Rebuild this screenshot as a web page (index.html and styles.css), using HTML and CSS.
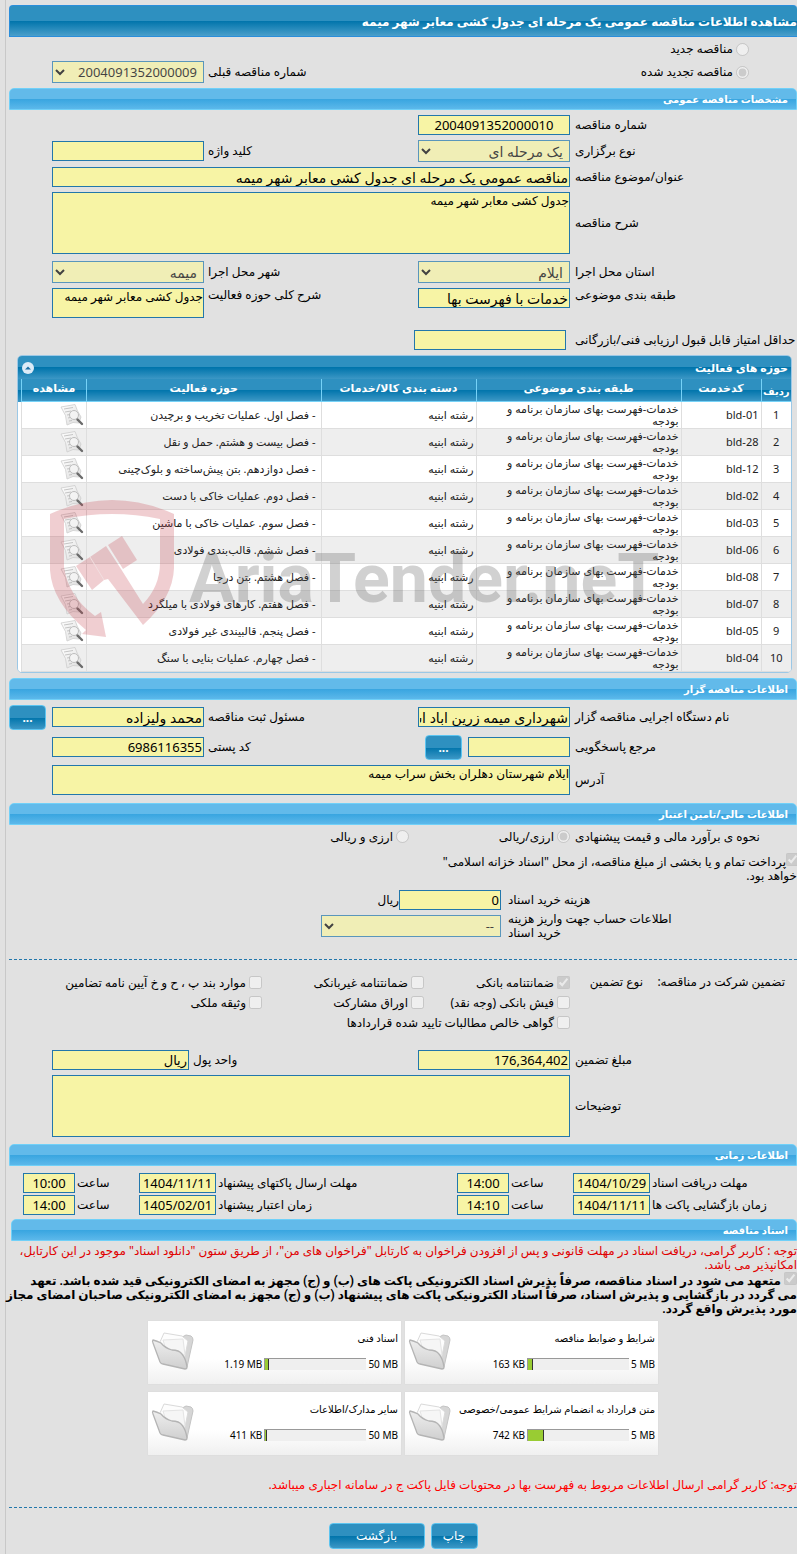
FILE: index.html
```html
<!DOCTYPE html>
<html lang="fa" dir="rtl">

<head>
    <meta charset="UTF-8">
    <meta name="viewport" content="width=device-width, initial-scale=1.0">
    <title>مشاهده اطلاعات مناقصه عمومی</title>
    <link rel="stylesheet" href="styles.css">
</head>

<body>
    <!-- icons -->
    <svg class="defs" width="0" height="0" aria-hidden="true">
        <defs>
            <linearGradient id="paper" x1="0" y1="0" x2="1" y2="1">
                <stop offset="0" stop-color="#ffffff" />
                <stop offset="1" stop-color="#dcdcdc" />
            </linearGradient>
            <linearGradient id="front" x1="0" y1="0" x2="0" y2="1">
                <stop offset="0" stop-color="#eeeeee" />
                <stop offset="1" stop-color="#cfcfcf" />
            </linearGradient>
        </defs>
        <symbol id="view" viewBox="0 0 24 24">
            <path d="M1 4 L15 1.500 Q17 8 21 14 L19 20 Q13 18 7 22 Q7 12 1 4Z" fill="url(#paper)" stroke="#cdcdcd" stroke-width=".8" />
            <path d="M4 6 L13 4.500 M5 9 L11 8 M7 12 L10 11.500 M8 15 L10 14.500 M9 18 L12 17.500" stroke="#b8b8b8" stroke-width=".8" fill="none" />
            <circle cx="14" cy="12" r="4.500" fill="#f4f4f4" fill-opacity=".85" stroke="#bdbdbd" />
            <path d="M17.500 16.500 L22 21" stroke="#6b6b6b" stroke-width="2.400" stroke-linecap="round" />
        </symbol>
        <symbol id="folder" viewBox="0 0 44 40">
            <path d="M30 9 Q31 5 35 4 L40 5 Q42 6 42 9 L36 36 L31 33Z" fill="#d6d6d6" stroke="#c4c4c4" />
            <path d="M9 11 L13 2 L31 5 L37 10 L33 30 L14 24Z" fill="#fdfdfd" stroke="#dadada" />
            <path d="M12 9 L32 8 L34 24 L16 22Z" fill="#f6f6f6" stroke="#e4e4e4" />
            <path d="M2 9 Q1 10 2 12 L9 31 Q10 33 12 33 L34 38 Q36 38 36 36 Q35 28 31 23 Q28 19 21 19 Q14 17 10 12 Q6 10 2 9Z" fill="url(#front)" stroke="#b4b4b4" stroke-width="1.300" />
        </symbol>
    </svg>

    <div class="page">
        <h1 class="page-title">مشاهده اطلاعات مناقصه عمومی یک مرحله ای جدول کشی معابر شهر میمه</h1>

        <div class="form">
            <div class="row row-radio">
                <label class="option"><input type="radio" name="kind" disabled>مناقصه جدید</label>
            </div>
            <div class="row">
                <label class="option"><input type="radio" name="kind" checked disabled>مناقصه تجدید شده</label>
                <label class="lbl-mid" for="prev">شماره مناقصه قبلی</label>
                <select class="field" id="prev" disabled>
                    <option>2004091352000009</option>
                </select>
                <div class="tail"></div>
            </div>
        </div>

        <h2 class="bar">مشخصات مناقصه عمومی</h2>
        <div class="form">
            <div class="row">
                <label class="lbl" for="number">شماره مناقصه</label>
                <input class="field center" id="number" type="text" value="2004091352000010" readonly>
            </div>
            <div class="row">
                <label class="lbl" for="type">نوع برگزاری</label>
                <select class="field fa" id="type" disabled>
                    <option>یک مرحله ای</option>
                </select>
                <label class="lbl-mid" for="keyword">کلید واژه</label>
                <input class="field" id="keyword" type="text" readonly>
                <div class="tail"></div>
            </div>
            <div class="row">
                <label class="lbl" for="subject">عنوان/موضوع مناقصه</label>
                <input class="field fa wide" id="subject" type="text" value="مناقصه عمومی یک مرحله ای جدول کشی معابر شهر میمه" readonly>
                <div class="tail"></div>
            </div>
            <div class="row">
                <label class="lbl" for="desc">شرح مناقصه</label>
                <textarea class="field wide tall" id="desc" readonly>جدول کشی معابر شهر میمه</textarea>
                <div class="tail"></div>
            </div>
            <div class="row spaced">
                <label class="lbl" for="province">استان محل اجرا</label>
                <select class="field fa" id="province" disabled>
                    <option>ایلام</option>
                </select>
                <label class="lbl-mid" for="city">شهر محل اجرا</label>
                <select class="field fa" id="city" disabled>
                    <option>میمه</option>
                </select>
                <div class="tail"></div>
            </div>
            <div class="row row-top">
                <label class="lbl" for="category">طبقه بندی موضوعی</label>
                <input class="field fa" id="category" type="text" value="خدمات با فهرست بها" readonly>
                <label class="lbl-mid" for="activity">شرح کلی حوزه فعالیت</label>
                <textarea class="field" id="activity" readonly>جدول کشی معابر شهر میمه</textarea>
                <div class="tail"></div>
            </div>
            <div class="row row-score">
                <label class="lbl" for="score">حداقل امتیاز قابل قبول ارزیابی فنی/بازرگانی</label>
                <input class="field" id="score" type="text" readonly>
            </div>
        </div>

        <div class="panel">
            <div class="panel-head">
                <span>حوزه های فعالیت</span>
                <button class="toggle" type="button" aria-label="بستن">
                    <svg width="12" height="12" viewBox="0 0 12 12"><path d="M3 7.500 L6 4.500 L9 7.500Z" fill="#1a6fa5" /></svg>
                </button>
            </div>
            <div class="panel-body">
                <table class="list">
                    <colgroup>
                        <col class="c-row">
                        <col class="c-code">
                        <col class="c-cat">
                        <col class="c-group">
                        <col>
                        <col class="c-view">
                    </colgroup>
                    <thead>
                        <tr>
                            <th class="low">ردیف</th>
                            <th>کدخدمت</th>
                            <th>طبقه بندی موضوعی</th>
                            <th>دسته بندی کالا/خدمات</th>
                            <th>حوزه فعالیت</th>
                            <th>مشاهده</th>
                        </tr>
                    </thead>
                    <tbody>
                        <tr>
                            <td class="n">1</td><td class="code">bld-01</td>
                            <td>خدمات-فهرست بهای سازمان برنامه و بودجه</td><td>رشته ابنیه</td>
                            <td>- فصل اول. عملیات تخریب و برچیدن</td>
                            <td class="view"><svg class="icon"><use href="#view" /></svg></td>
                        </tr>
                        <tr>
                            <td class="n">2</td><td class="code">bld-28</td>
                            <td>خدمات-فهرست بهای سازمان برنامه و بودجه</td><td>رشته ابنیه</td>
                            <td>- فصل بیست و هشتم. حمل و نقل</td>
                            <td class="view"><svg class="icon"><use href="#view" /></svg></td>
                        </tr>
                        <tr>
                            <td class="n">3</td><td class="code">bld-12</td>
                            <td>خدمات-فهرست بهای سازمان برنامه و بودجه</td><td>رشته ابنیه</td>
                            <td>- فصل دوازدهم. بتن پیش‌ساخته و بلوک‌چینی</td>
                            <td class="view"><svg class="icon"><use href="#view" /></svg></td>
                        </tr>
                        <tr>
                            <td class="n">4</td><td class="code">bld-02</td>
                            <td>خدمات-فهرست بهای سازمان برنامه و بودجه</td><td>رشته ابنیه</td>
                            <td>- فصل دوم. عملیات خاکی با دست</td>
                            <td class="view"><svg class="icon"><use href="#view" /></svg></td>
                        </tr>
                        <tr>
                            <td class="n">5</td><td class="code">bld-03</td>
                            <td>خدمات-فهرست بهای سازمان برنامه و بودجه</td><td>رشته ابنیه</td>
                            <td>- فصل سوم. عملیات خاکی با ماشین</td>
                            <td class="view"><svg class="icon"><use href="#view" /></svg></td>
                        </tr>
                        <tr>
                            <td class="n">6</td><td class="code">bld-06</td>
                            <td>خدمات-فهرست بهای سازمان برنامه و بودجه</td><td>رشته ابنیه</td>
                            <td>- فصل ششم. قالب‌بندی فولادی</td>
                            <td class="view"><svg class="icon"><use href="#view" /></svg></td>
                        </tr>
                        <tr>
                            <td class="n">7</td><td class="code">bld-08</td>
                            <td>خدمات-فهرست بهای سازمان برنامه و بودجه</td><td>رشته ابنیه</td>
                            <td>- فصل هشتم. بتن درجا</td>
                            <td class="view"><svg class="icon"><use href="#view" /></svg></td>
                        </tr>
                        <tr>
                            <td class="n">8</td><td class="code">bld-07</td>
                            <td>خدمات-فهرست بهای سازمان برنامه و بودجه</td><td>رشته ابنیه</td>
                            <td>- فصل هفتم. کارهای فولادی با میلگرد</td>
                            <td class="view"><svg class="icon"><use href="#view" /></svg></td>
                        </tr>
                        <tr>
                            <td class="n">9</td><td class="code">bld-05</td>
                            <td>خدمات-فهرست بهای سازمان برنامه و بودجه</td><td>رشته ابنیه</td>
                            <td>- فصل پنجم. قالبیندی غیر فولادی</td>
                            <td class="view"><svg class="icon"><use href="#view" /></svg></td>
                        </tr>
                        <tr>
                            <td class="n">10</td><td class="code">bld-04</td>
                            <td>خدمات-فهرست بهای سازمان برنامه و بودجه</td><td>رشته ابنیه</td>
                            <td>- فصل چهارم. عملیات بنایی با سنگ</td>
                            <td class="view"><svg class="icon"><use href="#view" /></svg></td>
                        </tr>
                    </tbody>
                </table>
            </div>
            <!-- watermark over the list -->
            <div class="watermark" dir="ltr">
                <svg width="126" height="138" viewBox="0 0 126 138">
                    <path d="M0 14 Q62 -14 124 14 V68 Q123 98 93 125 L58 79 L54 80 L42 90 L26 66 L40 57 L56 46 L71 69 L93 104 Q110 86 110 63 V19 Q62 9 14 19 V67 Q18 96 45 116 L51 112 L56 137 L32 134 L36 130 Q2 102 0 70Z" />
                    <path d="M58 45 L72 36 L87 60 L73 69Z" />
                    <path d="M40 57 L54 80" stroke="#f2dfe0" fill="none" />
                </svg>
                <span>AriaTender.neT</span>
            </div>
        </div>

        <h2 class="bar">اطلاعات مناقصه گزار</h2>
        <div class="form">
            <div class="row row-btn">
                <label class="lbl" for="org">نام دستگاه اجرایی مناقصه گزار</label>
                <input class="field fa" id="org" type="text" value="شهرداری میمه زرین اباد استان ایلام" readonly>
                <label class="lbl-mid" for="registrar">مسئول ثبت مناقصه</label>
                <input class="field fa" id="registrar" type="text" value="محمد ولیزاده" readonly>
                <div class="tail"><button class="btn btn-dots" type="button">...</button></div>
            </div>
            <div class="row row-btn">
                <label class="lbl" for="contact">مرجع پاسخگویی</label>
                <input class="field contact" id="contact" type="text" readonly>
                <button class="btn btn-dots" type="button">...</button>
                <label class="lbl-mid" for="postal">کد پستی</label>
                <input class="field" id="postal" type="text" value="6986116355" readonly>
                <div class="tail"></div>
            </div>
            <div class="row">
                <label class="lbl" for="address">آدرس</label>
                <textarea class="field wide" id="address" readonly>ایلام شهرستان دهلران بخش سراب میمه</textarea>
                <div class="tail"></div>
            </div>
        </div>

        <h2 class="bar bar-gap">اطلاعات مالی/تامین اعتبار</h2>
        <div class="form">
            <div class="row row-radio">
                <span class="lbl">نحوه ی برآورد مالی و قیمت پیشنهادی</span>
                <label class="option currency"><input type="radio" name="currency" checked disabled>ارزی/ریالی</label>
                <label class="option currency"><input type="radio" name="currency" disabled>ارزی و ریالی</label>
            </div>
            <p class="treasury">
                <input type="checkbox" id="treasury" checked disabled><label for="treasury">پرداخت تمام و یا بخشی از مبلغ مناقصه، از محل "اسناد خزانه اسلامی"<br>خواهد بود.</label>
            </p>
            <div class="row">
                <label class="lbl lbl-cost" for="cost">هزینه خرید اسناد</label>
                <input class="field cost" id="cost" type="text" value="0" readonly>
                <span>ریال</span>
            </div>
            <div class="row account">
                <label class="lbl lbl-cost" for="account">اطلاعات حساب جهت واریز هزینه<br>خرید اسناد</label>
                <select class="field" id="account" disabled>
                    <option>--</option>
                </select>
            </div>
        </div>

        <div class="guarantee">
            <span class="guarantee-title">تضمین شرکت در مناقصه:</span>
            <span class="guarantee-type">نوع تضمین</span>
            <div class="checks">
                <div class="row">
                    <label class="check"><input type="checkbox" checked disabled>ضمانتنامه بانکی</label>
                    <label class="check check-mid"><input type="checkbox" disabled>ضمانتنامه غیربانکی</label>
                    <label class="check"><input type="checkbox" disabled>موارد بند پ ، ح و خ آیین نامه تضامین</label>
                </div>
                <div class="row">
                    <label class="check"><input type="checkbox" disabled>فیش بانکی (وجه نقد)</label>
                    <label class="check check-mid"><input type="checkbox" disabled>اوراق مشارکت</label>
                    <label class="check"><input type="checkbox" disabled>وثیقه ملکی</label>
                </div>
                <div class="row">
                    <label class="check"><input type="checkbox" disabled>گواهی خالص مطالبات تایید شده قراردادها</label>
                </div>
            </div>
        </div>
        <div class="form amounts">
            <div class="row">
                <label class="lbl" for="amount">مبلغ تضمین</label>
                <input class="field" id="amount" type="text" value="176,364,402" readonly>
                <label class="lbl-mid" for="unit">واحد پول</label>
                <input class="field unit" id="unit" type="text" value="ریال" readonly>
                <div class="tail"></div>
            </div>
            <div class="row">
                <label class="lbl" for="notes">توضیحات</label>
                <textarea class="field wide tall" id="notes" readonly></textarea>
                <div class="tail"></div>
            </div>
        </div>

        <h2 class="bar">اطلاعات زمانی</h2>
        <div class="dates">
            <div class="row">
                <label class="date-lbl" for="d1">مهلت دریافت اسناد</label>
                <input class="field date" id="d1" type="text" value="1404/10/29" readonly>
                <label class="hour-lbl" for="t1">ساعت</label>
                <input class="field hour" id="t1" type="text" value="14:00" readonly>
                <label class="date-mid" for="d2">مهلت ارسال پاکتهای پیشنهاد</label>
                <input class="field date" id="d2" type="text" value="1404/11/11" readonly>
                <label class="hour-lbl" for="t2">ساعت</label>
                <input class="field hour" id="t2" type="text" value="10:00" readonly>
            </div>
            <div class="row">
                <label class="date-lbl" for="d3">زمان بازگشایی پاکت ها</label>
                <input class="field date" id="d3" type="text" value="1404/11/11" readonly>
                <label class="hour-lbl" for="t3">ساعت</label>
                <input class="field hour" id="t3" type="text" value="14:10" readonly>
                <label class="date-mid" for="d4">زمان اعتبار پیشنهاد</label>
                <input class="field date" id="d4" type="text" value="1405/02/01" readonly>
                <label class="hour-lbl" for="t4">ساعت</label>
                <input class="field hour" id="t4" type="text" value="14:00" readonly>
            </div>
        </div>

        <h2 class="bar bar-docs">اسناد مناقصه</h2>
        <p class="notice">توجه : کاربر گرامی، دریافت اسناد در مهلت قانونی و پس از افزودن فراخوان به کارتابل "فراخوان های من"، از طریق ستون "دانلود اسناد" موجود در این کارتابل،<br>امکانپذیر می باشد.</p>
        <p class="commit">
            <input type="checkbox" id="commit" checked disabled>
            <label for="commit">متعهد می شود در اسناد مناقصه، صرفاً پذیرش اسناد الکترونیکی پاکت های (ب) و (ج) مجهز به امضای الکترونیکی قید شده باشد. تعهد<br>می گردد در بازگشایی و پذیرش اسناد، صرفاً اسناد الکترونیکی پاکت های پیشنهاد (ب) و (ج) مجهز به امضای الکترونیکی صاحبان امضای مجاز<br>مورد پذیرش واقع گردد.</label>
        </p>

        <div class="cards">
            <div class="card">
                <div class="card-main">
                    <div class="card-title">شرایط و ضوابط مناقصه</div>
                    <div class="size"><span dir="ltr">5 MB</span><div class="meter"><div class="used" style="width: 5%"></div></div><span dir="ltr">163 KB</span></div>
                </div>
                <svg class="folder"><use href="#folder" /></svg>
            </div>
            <div class="card">
                <div class="card-main">
                    <div class="card-title">اسناد فنی</div>
                    <div class="size"><span dir="ltr">50 MB</span><div class="meter"><div class="used" style="width: 4%"></div></div><span dir="ltr">1.19 MB</span></div>
                </div>
                <svg class="folder"><use href="#folder" /></svg>
            </div>
            <div class="card">
                <div class="card-main">
                    <div class="card-title">متن قرارداد به انضمام شرایط عمومی/خصوصی</div>
                    <div class="size"><span dir="ltr">5 MB</span><div class="meter"><div class="used" style="width: 16%"></div></div><span dir="ltr">742 KB</span></div>
                </div>
                <svg class="folder"><use href="#folder" /></svg>
            </div>
            <div class="card">
                <div class="card-main">
                    <div class="card-title">سایر مدارک/اطلاعات</div>
                    <div class="size"><span dir="ltr">50 MB</span><div class="meter"><div class="used" style="width: 2%"></div></div><span dir="ltr">411 KB</span></div>
                </div>
                <svg class="folder"><use href="#folder" /></svg>
            </div>
        </div>

        <p class="notice notice-list">توجه: کاربر گرامی ارسال اطلاعات مربوط به فهرست بها در محتویات فایل پاکت ج در سامانه اجباری میباشد.</p>

        <div class="actions">
            <button class="btn" type="button">چاپ</button>
            <button class="btn btn-back" type="button">بازگشت</button>
        </div>
    </div>
</body>

</html>
```
FILE: styles.css
```css
* {
    box-sizing: border-box;
}

body {
    margin: 0;
    background-color: #e1e1e1;
    color: #000;
    font-family: "Noto Sans", "DejaVu Sans", sans-serif;
    font-size: 12px;
    line-height: 14px;
    overflow-x: hidden;
}

h1,
h2,
p {
    margin: 0;
}

input,
select,
textarea,
button {
    font-family: inherit;
    margin: 0;
}

.defs {
    position: absolute;
}

.page {
    min-height: 100vh;
    margin-left: 5px;
    padding: 5px 0 5px 3px;
    border-left: 1px solid #c8c8c8;
}

/* headings */
.page-title {
    height: 32px;
    border: 1px solid #2a8edb;
    border-right: 0;
    border-radius: 4px 4px 0 0;
    background: linear-gradient(#2e90c0 50%, #0074ab 50%, #4a9fcb);
    color: #fff;
    font-size: 12px;
    line-height: 32px;
    white-space: nowrap;
}

.bar {
    height: 22px;
    padding-right: 8px;
    border: 1px solid #70d0f8;
    border-radius: 5px 5px 0 0;
    background: linear-gradient(#62baea 50%, #38a5e0 50%, #5cb8ea);
    color: #fff;
    font-size: 10px;
    line-height: 20px;
}

.bar-gap {
    margin-top: 3px;
}

/* form rows */
.form {
    display: flex;
    flex-direction: column;
    gap: 5px;
    padding: 5px 0;
}

.row {
    display: flex;
    align-items: center;
}

.row-radio {
    height: 14px;
}

.row-top {
    align-items: flex-start;
}

.spaced {
    margin-top: 2px;
}

.row-score {
    margin-top: 7px;
}

.row-score .field {
    margin-right: 4px;
}

.row-btn {
    height: 25px;
}

.lbl {
    flex: none;
    width: 227px;
    padding-left: 5px;
    text-align: left;
    white-space: nowrap;
}

.lbl-mid {
    flex: 1;
    padding-left: 4px;
    text-align: left;
}

.tail {
    flex: none;
    width: 43px;
    display: flex;
    justify-content: flex-end;
}

.field {
    flex: none;
    width: 152px;
    height: 20px;
    padding: 0 1px;
    border: 1px solid #2277ab;
    border-radius: 0;
    background-color: #f7f4a5;
    color: #000;
    font-size: 13px;
    outline: none;
}

.field.fa {
    font-size: 14px;
}

select.field {
    height: 22px;
    padding: 0 2px;
    opacity: 0.7;
}

textarea.field {
    display: block;
    height: 30px;
    padding: 1px 0;
    font-size: 12px;
    line-height: 14px;
    resize: none;
    overflow: hidden;
}

textarea.tall {
    height: 62px;
}

.field.wide {
    flex: 1;
    width: auto;
}

.center {
    text-align: center;
}

.contact {
    width: 102px;
    margin-left: 6px;
}

.unit {
    width: 137px;
}

.option {
    display: flex;
    align-items: center;
    gap: 3px;
    padding-right: 48px;
}

.option input,
.check input,
.treasury input,
.commit input {
    width: 13px;
    height: 13px;
}

.option.currency {
    width: 161px;
    padding-right: 0;
}

.treasury {
    padding: 4px 0 2px;
}

.treasury input {
    margin-right: -2px;
    vertical-align: 0;
}

.lbl-cost {
    width: 296px;
    padding-left: 7px;
}

.cost {
    width: 102px;
}

.account {
    height: 22px;
}

.account .field {
    width: 180px;
}

/* buttons */
.btn {
    min-width: 47px;
    height: 26px;
    padding: 0 8px;
    border: 1px solid #5cc4f0;
    border-radius: 4px;
    background: linear-gradient(#2e90c0 50%, #0074ab 50%, #3c97c5);
    color: #fff;
    font-size: 12px;
}

.btn-dots {
    min-width: 0;
    width: 37px;
    height: 25px;
    padding: 0;
    font-weight: bold;
}

/* activity list */
.panel {
    position: relative;
    margin: 0 5px 5px 8px;
    border: 1px solid #9cc8e6;
    border-radius: 5px;
    overflow: hidden;
    font-size: 11px;
}

.panel-head {
    display: flex;
    justify-content: space-between;
    align-items: center;
    height: 23px;
    padding: 0 3px 0 4px;
    background: linear-gradient(#2e90c0 50%, #0074ab 50%, #3c97c5);
    color: #fff;
    font-weight: bold;
}

.toggle {
    width: 12px;
    height: 12px;
    padding: 0;
    border: 0;
    border-radius: 6px;
    background-color: #dcebf7;
}

.toggle svg {
    display: block;
}

.panel-body {
    padding-left: 3px;
    background: linear-gradient(#2e90c0 11px, #0074ab 11px, #3c97c5 23px, #fff 23px);
}

.list {
    width: 100%;
    table-layout: fixed;
    border-collapse: collapse;
    color: #222;
}

.c-row {
    width: 30px;
}

.c-code {
    width: 80px;
}

.c-cat {
    width: 205px;
}

.c-group {
    width: 155px;
}

.c-view {
    width: 65px;
}

.list th {
    height: 22px;
    padding: 0 0 4px;
    border-left: 1px solid #76d2f7;
    border-bottom: 1px solid #76d2f7;
    background: linear-gradient(#2e90c0 50%, #0074ab 50%, #3c97c5);
    color: #fff;
}

.list .low {
    padding: 2px 0 0;
    font-size: 10px;
}

.list td {
    height: 27px;
    padding: 0 2px;
    border-left: 1px solid #dedede;
    border-bottom: 1px solid #dedede;
    background-color: #fff;
    line-height: 12px;
}

.list td:nth-child(5) {
    padding-right: 5px;
}

.list tr:nth-child(even) td {
    background-color: #eee;
}

.list .n {
    padding: 0;
    text-align: center;
}

.icon {
    display: block;
    width: 24px;
    height: 24px;
}

.watermark {
    position: absolute;
    left: 32px;
    top: 144px;
    display: flex;
    align-items: flex-end;
    gap: 13px;
    color: rgba(90, 90, 90, 0.28);
    font-family: Roboto, sans-serif;
    font-size: 68px;
    font-weight: bold;
    line-height: 118px;
    pointer-events: none;
}

.watermark svg {
    fill: rgba(196, 60, 70, 0.25);
}

/* guarantee */
.guarantee {
    display: flex;
    align-items: flex-start;
    margin-top: 17px;
    padding: 15px 12px 0 0;
    border-top: 1px dashed #2277ab;
}

.guarantee-title {
    width: 142px;
}

.guarantee-type {
    width: 73px;
}

.checks .row {
    height: 20px;
}

.checks {
    margin-top: -2px;
    flex: 1;
}

.check {
    display: flex;
    gap: 3px;
    width: 146px;
    white-space: nowrap;
}

.check-mid {
    width: 162px;
}

.amounts {
    margin-top: 12px;
    padding-bottom: 7px;
}

/* dates */
.dates {
    display: flex;
    flex-direction: column;
    gap: 2px;
    padding: 7px 0 4px 14px;
}

.date-lbl {
    width: 147px;
    padding-left: 2px;
    text-align: left;
}

.date-mid {
    flex: 1;
    padding-left: 2px;
    text-align: left;
}

.hour-lbl {
    width: 64px;
    padding-left: 2px;
    text-align: left;
}

.date {
    width: 77px;
    text-align: center;
}

.hour {
    width: 52px;
    text-align: center;
}

/* documents */
.bar-docs {
    margin-left: 2px;
}

.notice {
    padding-top: 3px;
    color: #e00000;
}

.commit {
    font-family: Roboto, "DejaVu Sans", sans-serif;
    font-weight: bold;
    white-space: nowrap;
}

.cards {
    display: flex;
    flex-wrap: wrap;
    justify-content: center;
    gap: 8px 4px;
    max-width: 512px;
    margin: 5px auto 0;
}

.card {
    display: flex;
    width: 253px;
    height: 63px;
    padding: 10px 3px;
    background: linear-gradient(#fff 60%, #f0f0f0);
    box-shadow: 0 0 1px #ccc;
    font-size: 10px;
}

.card-main {
    flex: 1;
}

.card-title {
    white-space: nowrap;
}

.size {
    display: flex;
    align-items: center;
    gap: 2px;
    margin-top: 12px;
}

.meter {
    width: 102px;
    height: 12px;
    border-top: 1px solid #999;
    border-left: 1px solid #999;
    background-color: #efefef;
    direction: ltr;
}

.used {
    height: 11px;
    border-right: 1px solid #333;
    background-color: #9c3;
}

.folder {
    width: 44px;
    height: 40px;
}

.notice-list {
    margin-top: 20px;
    color: #f00;
}

.actions {
    display: flex;
    justify-content: center;
    gap: 6px;
    margin-top: 15px;
    padding-top: 15px;
    border-top: 1px dashed #2277ab;
}

.btn-back {
    width: 96px;
}
```
